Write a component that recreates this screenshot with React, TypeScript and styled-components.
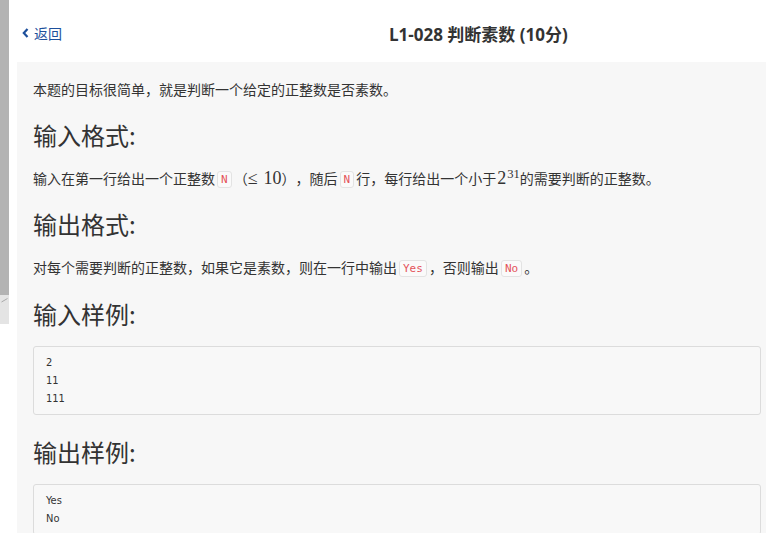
import React from 'react';
import styled, { createGlobalStyle } from 'styled-components';

const Global = createGlobalStyle`
  html, body { margin: 0; padding: 0; background: #fff; }
  body {
    font-family: "Noto Sans CJK SC", "Noto Sans", sans-serif;
    color: #333;
    overflow: hidden;
    text-spacing-trim: space-all;
  }
`;

const Shell = styled.div`
  display: flex;
  width: 766px;
  height: 533px;
  overflow: hidden;
  background: #fff;
`;

const Rail = styled.div`
  width: 9px;
  flex: none;
  display: flex;
  flex-direction: column;
`;

const RailTrack = styled.div`
  height: 295px;
  background: #b3b3b3;
`;

const RailFoot = styled.div`
  height: 29px;
  background: #e4e4e4;
  display: flex;
  justify-content: center;
  padding-top: 3px;
  box-sizing: border-box;
`;

const Main = styled.div`
  flex: 1;
  min-width: 0;
  padding-left: 8px;
  display: flex;
  flex-direction: column;
`;

const Header = styled.header`
  height: 62px;
  flex: none;
  display: flex;
  align-items: center;
  padding-top: 4px;
  box-sizing: border-box;
`;

const BackLink = styled.a`
  display: flex;
  align-items: center;
  gap: 5px;
  margin-left: 5px;
  color: #1d4f9b;
  font-size: 14px;
  text-decoration: none;
  cursor: pointer;
`;

const Title = styled.h1`
  margin: 0 0 0 327px;
  font-family: "Open Sans", "Noto Sans CJK SC", sans-serif;
  font-size: 17px;
  font-weight: 700;
  color: #333;
  white-space: nowrap;
`;

const Panel = styled.main`
  width: 760px;
  flex: none;
  flex-grow: 1;
  background: #f7f7f7;
  padding: 15px 16px 0;
  box-sizing: border-box;
`;

const Para = styled.p`
  margin: 0;
  font-size: 14px;
  line-height: 24px;
  color: #333;
`;

const Heading = styled.h2<{ $top?: number; $bottom?: number }>`
  margin: ${(p) => p.$top ?? 19}px 0 ${(p) => p.$bottom ?? 17}px;
  font-size: 24px;
  font-weight: 400;
  line-height: 29px;
  color: #333;
`;

const Tag = styled.code`
  display: inline-block;
  font-family: "DejaVu Sans Mono", "Liberation Mono", monospace;
  font-size: 11px;
  line-height: 15px;
  color: #e4535b;
  background: #fafafa;
  border: 1px solid #e3e3e3;
  border-radius: 3px;
  padding: 0 3px;
  margin: 0 2px;
  vertical-align: 1px;
`;

const Math = styled.span<{ $padL?: number; $padR?: number }>`
  font-family: "Liberation Serif", "DejaVu Serif", serif;
  font-size: 18px;
  line-height: 1;
  padding-left: ${(p) => p.$padL ?? 0}px;
  padding-right: ${(p) => p.$padR ?? 0}px;
`;

const Rel = styled.span`
  margin-right: 6px;
`;

const Sup = styled.sup`
  font-size: 0.7em;
  line-height: 1;
  vertical-align: 0;
  position: relative;
  top: -0.5em;
  margin-left: 1px;
`;

const CodeBlock = styled.pre`
  margin: 0;
  padding: 7px 12px 6px;
  border: 1px solid #dcdcdc;
  border-radius: 3px;
  background: #f8f8f8;
  font-family: "DejaVu Sans Condensed", "DejaVu Sans Mono", monospace;
  font-stretch: condensed;
  font-size: 11px;
  line-height: 18px;
  color: #333;
`;

const Chevron = () => (
  <svg width="7" height="10" viewBox="0 0 7 10">
    <path d="M5.5 1 L1.8 5 L5.5 9" fill="none" stroke="#1d4f9b" strokeWidth="2.2" />
  </svg>
);

const Tick = () => (
  <svg width="7" height="5" viewBox="0 0 7 5">
    <path d="M0.5 4 L6.5 0.5" fill="none" stroke="#a8a8a8" strokeWidth="1" />
  </svg>
);

export default function App() {
  return (
    <>
      <Global />
      <Shell>
        <Rail>
          <RailTrack />
          <RailFoot>
            <Tick />
          </RailFoot>
        </Rail>
        <Main>
          <Header>
            <BackLink>
              <Chevron />
              返回
            </BackLink>
            <Title>L1-028 判断素数 (10分)</Title>
          </Header>
          <Panel>
            <Para>本题的目标很简单，就是判断一个给定的正整数是否素数。</Para>
            <Heading>输入格式:</Heading>
            <Para>
              输入在第一行给出一个正整数<Tag>N</Tag>（
              <Math>
                <Rel>≤</Rel>10
              </Math>
              ），随后<Tag>N</Tag>行，每行给出一个小于
              <Math $padL={1}>
                2<Sup>31</Sup>
              </Math>
              的需要判断的正整数。
            </Para>
            <Heading>输出格式:</Heading>
            <Para>
              对每个需要判断的正整数，如果它是素数，则在一行中输出<Tag>Yes</Tag>，否则输出<Tag>No</Tag>。
            </Para>
            <Heading $top={20} $bottom={18}>输入样例:</Heading>
            <CodeBlock>{'2\n11\n111'}</CodeBlock>
            <Heading $top={22} $bottom={18}>输出样例:</Heading>
            <CodeBlock>{'Yes\nNo'}</CodeBlock>
          </Panel>
        </Main>
      </Shell>
    </>
  );
}
